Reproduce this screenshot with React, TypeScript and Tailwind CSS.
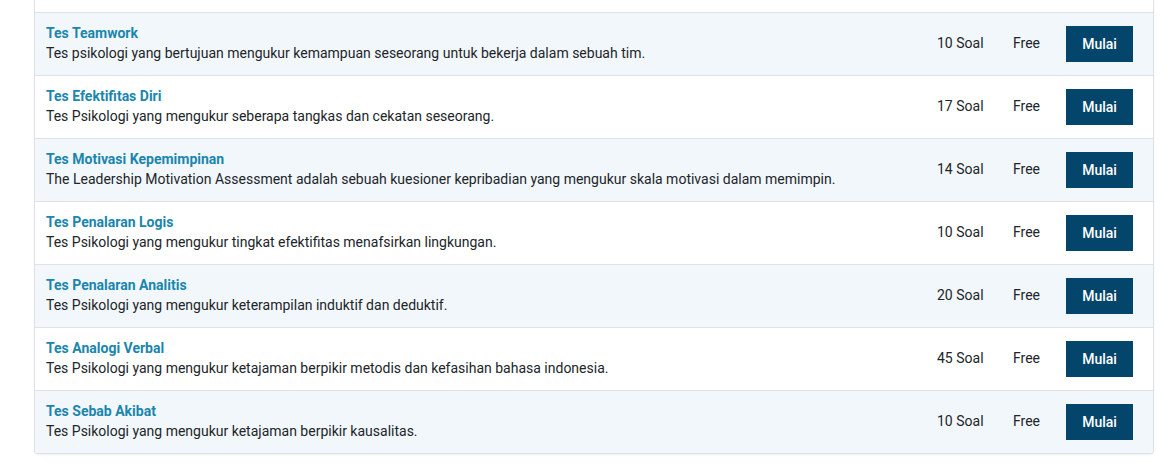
const tests = [
  { title: "Tes Teamwork", desc: "Tes psikologi yang bertujuan mengukur kemampuan seseorang untuk bekerja dalam sebuah tim.", soal: 10 },
  { title: "Tes Efektifitas Diri", desc: "Tes Psikologi yang mengukur seberapa tangkas dan cekatan seseorang.", soal: 17 },
  { title: "Tes Motivasi Kepemimpinan", desc: "The Leadership Motivation Assessment adalah sebuah kuesioner kepribadian yang mengukur skala motivasi dalam memimpin.", soal: 14 },
  { title: "Tes Penalaran Logis", desc: "Tes Psikologi yang mengukur tingkat efektifitas menafsirkan lingkungan.", soal: 10 },
  { title: "Tes Penalaran Analitis", desc: "Tes Psikologi yang mengukur keterampilan induktif dan deduktif.", soal: 20 },
  { title: "Tes Analogi Verbal", desc: "Tes Psikologi yang mengukur ketajaman berpikir metodis dan kefasihan bahasa indonesia.", soal: 45 },
  { title: "Tes Sebab Akibat", desc: "Tes Psikologi yang mengukur ketajaman berpikir kausalitas.", soal: 10 },
];

export default function App() {
  return (
    <div className="min-h-screen bg-white font-['Roboto',sans-serif] text-[14px] text-[#212529]">
      <div className="ml-[34px] w-[1120px] overflow-hidden rounded-b-[4px] border-x border-b border-[#dee2e6] bg-white shadow-[0_1px_2px_rgba(0,0,0,0.06)]">
        <div className="h-[12px] bg-white" />
        {tests.map((t, i) => (
          <div
            key={t.title}
            className={`flex h-[63px] items-center border-t border-[#dee2e6] pl-[11px] pr-[20px] ${
              i % 2 === 0 ? "bg-[#f2f7fb]" : "bg-white"
            }`}
          >
            <div className="flex-1 pb-[2px] leading-[20px]">
              <p className="font-bold text-[#1a86ad]">{t.title}</p>
              <p>{t.desc}</p>
            </div>
            <span className="w-[48px] pb-[2px]">{t.soal} Soal</span>
            <span className="ml-[28px] w-[26px] pb-[2px]">Free</span>
            <button
              type="button"
              className="ml-[27px] h-[36px] w-[67px] bg-[#04456b] font-medium text-white"
            >
              Mulai
            </button>
          </div>
        ))}
      </div>
    </div>
  );
}
